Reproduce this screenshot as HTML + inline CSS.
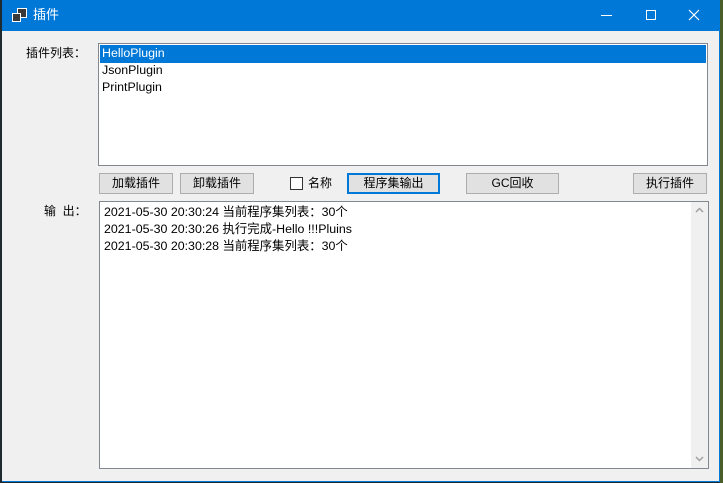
<!DOCTYPE html>
<html><head><meta charset="utf-8"><style>
*{margin:0;padding:0;box-sizing:border-box}
body{width:723px;height:483px;overflow:hidden;background:#1e2a30;position:relative;font-family:"Liberation Sans","Noto Sans CJK SC",sans-serif;font-size:12px;color:#000}
.a{position:absolute}
#win{left:2px;top:0;width:718px;height:482px;background:#f0f0f0;border-right:1px solid #0078d7;border-bottom:1px solid #0078d7}
#tb{left:0;top:0;width:717px;height:31px;background:#0078d7;color:#fff}
.btn{position:absolute;background:#e1e1e1;border:1px solid #adadad;text-align:center;line-height:19px;font-size:12px}
.box{position:absolute;background:#fff;border:1px solid #828790}
.row{position:absolute;left:3px;height:17px;line-height:17px;font-size:12.4px}
</style></head><body>
<div class="a" style="left:720px;top:0;width:3px;height:483px;background:#4a5e2a"></div>
<div class="a" id="win">
<div class="a" id="tb">
<div class="a" style="left:15px;top:8px;width:10px;height:10px;border:1.5px solid #fff;background:#3a3a3a"></div>
<div class="a" style="left:10px;top:13px;width:9px;height:9px;border:1.5px solid #fff;background:#3a3a3a"></div>
<div class="a" style="left:31px;top:7px;font-size:13px;line-height:16px">插件</div>
<div class="a" style="left:599px;top:15px;width:11px;height:1px;background:#fff"></div>
<div class="a" style="left:644px;top:10px;width:10px;height:10px;border:1px solid #fff"></div>
<svg class="a" style="left:686px;top:9px" width="12" height="12"><path d="M1 1L11 11M11 1L1 11" stroke="#fff" stroke-width="1.2"/></svg>
</div>
<div class="a" style="left:24px;top:45px;line-height:16px">插件列表：</div>
<div class="box" style="left:96px;top:43px;width:610px;height:123px">
<div class="a" style="left:1px;top:1px;width:606px;height:18px;background:#0078d7"></div>
<div class="row" style="top:1px;color:#fff">HelloPlugin</div>
<div class="row" style="top:18px">JsonPlugin</div>
<div class="row" style="top:35px">PrintPlugin</div>
</div>
<div class="btn" style="left:97px;top:173px;width:74px;height:21px">加载插件</div>
<div class="btn" style="left:178px;top:173px;width:74px;height:21px">卸载插件</div>
<div class="a" style="left:288px;top:177px;width:13px;height:13px;border:1px solid #333;background:#fff"></div>
<div class="a" style="left:306px;top:175px;line-height:16px">名称</div>
<div class="btn" style="left:345px;top:173px;width:93px;height:21px;border:2px solid #0078d7;line-height:17px">程序集输出</div>
<div class="btn" style="left:464px;top:173px;width:93px;height:21px">GC回收</div>
<div class="btn" style="left:631px;top:173px;width:74px;height:21px">执行插件</div>
<div class="a" style="left:42px;top:203px;line-height:16px">输&nbsp;&nbsp;出：</div>
<div class="box" style="left:97px;top:201px;width:610px;height:268px">
<div class="row" style="left:4px;top:2px">2021-05-30 20:30:24 当前程序集列表：30个</div>
<div class="row" style="left:4px;top:19px">2021-05-30 20:30:26 执行完成-Hello !!!Pluins</div>
<div class="row" style="left:4px;top:36px">2021-05-30 20:30:28 当前程序集列表：30个</div>
<div class="a" style="right:0;top:0;width:17px;height:266px;background:#f0f0f0">
<svg class="a" style="left:4px;top:5px" width="9" height="6"><path d="M1 5L4.5 1.5L8 5" stroke="#a0a0a0" stroke-width="1.5" fill="none"/></svg>
<svg class="a" style="left:4px;top:254px" width="9" height="6"><path d="M1 1L4.5 4.5L8 1" stroke="#a0a0a0" stroke-width="1.5" fill="none"/></svg>
</div>
</div>
</div>
</body></html>
